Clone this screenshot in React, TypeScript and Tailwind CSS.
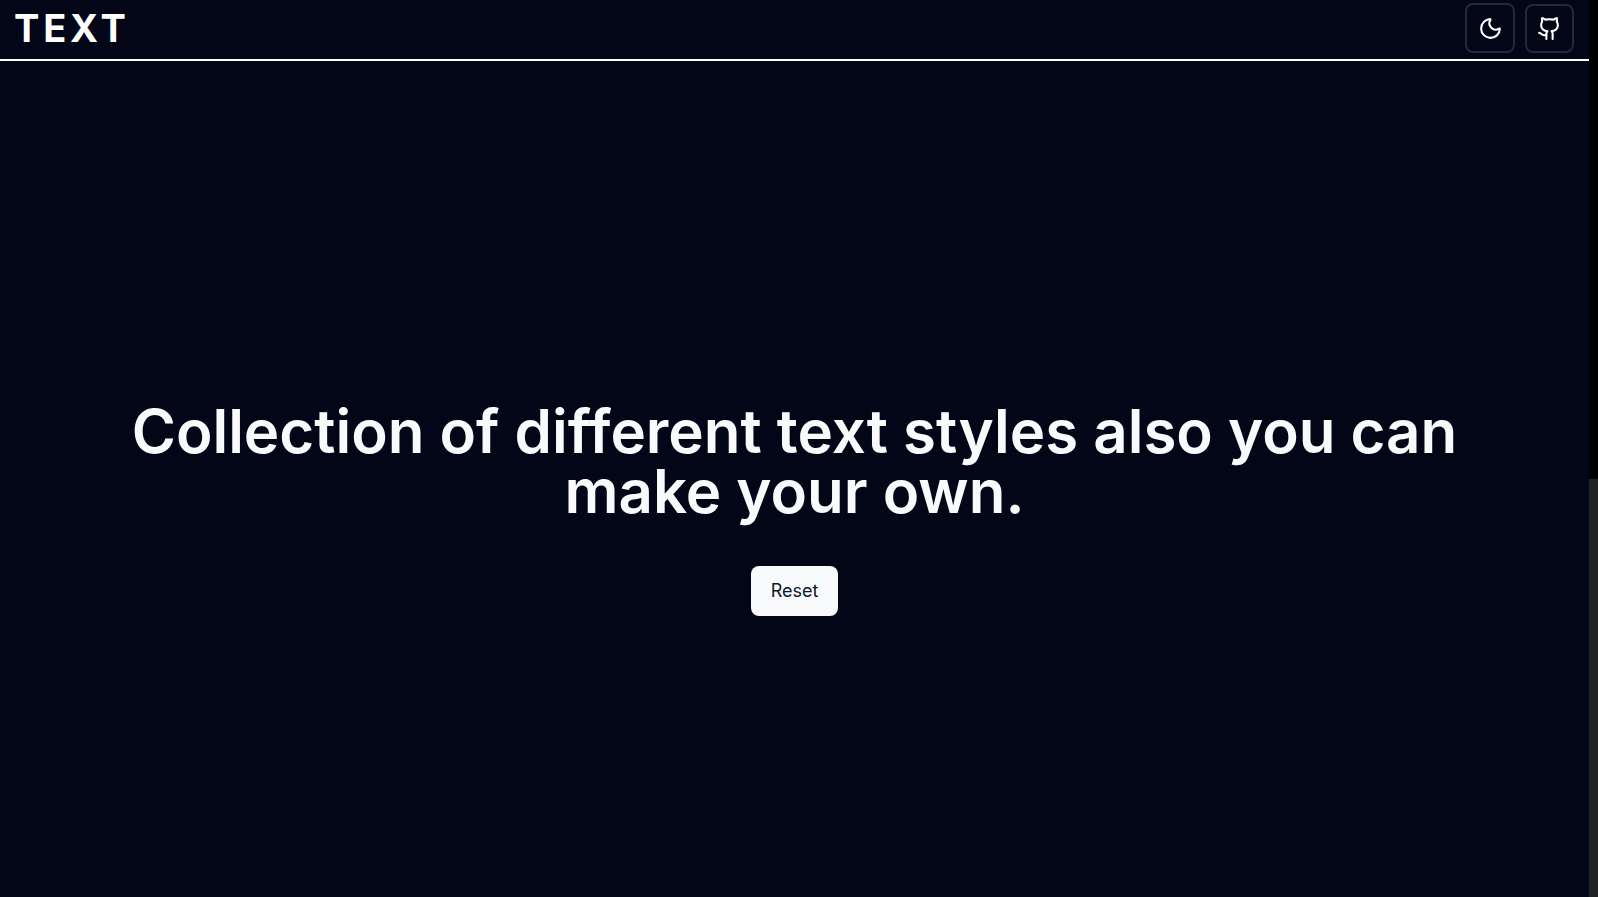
import { Github, Moon } from "lucide-react";

const iconBox =
  "flex items-center justify-center rounded-lg border-2 border-[#1e293b] text-white";

export default function App() {
  return (
    <div className="flex h-screen bg-[#030617] font-['Inter',sans-serif] text-[#f8fafc] [font-optical-sizing:none]">
      <div className="flex min-w-0 flex-1 flex-col">
        <header className="flex h-[61px] items-start justify-between border-b-2 border-white pl-[14px] pr-[15px] pt-[3px]">
          <a href="#" className="text-[38px] leading-[50px] font-bold tracking-widest text-white">
            TEXT
          </a>
          <div className="flex items-end gap-[10px]">
            <button type="button" aria-label="Toggle theme" className={`size-[50px] ${iconBox}`}>
              <Moon size={25} strokeWidth={2} />
            </button>
            <a href="#" aria-label="GitHub" className={`size-[49px] ${iconBox}`}>
              <Github size={25} strokeWidth={2} />
            </a>
          </div>
        </header>
        <main className="flex flex-1 flex-col items-center px-20 pt-[340px]">
          <h1 className="text-center text-[60px] leading-[60px] font-semibold">
            Collection of different text styles also you can make your own.
          </h1>
          <button
            type="button"
            className="mt-[45px] h-[50px] rounded-lg bg-[#f8fafc] px-5 text-[18px] leading-6 text-[#0f172a]"
          >
            Reset
          </button>
        </main>
      </div>
      <div aria-hidden="true" className="flex w-[9px] flex-col bg-black">
        <div className="h-[479px]" />
        <div className="flex-1 bg-[#222222]" />
      </div>
    </div>
  );
}
